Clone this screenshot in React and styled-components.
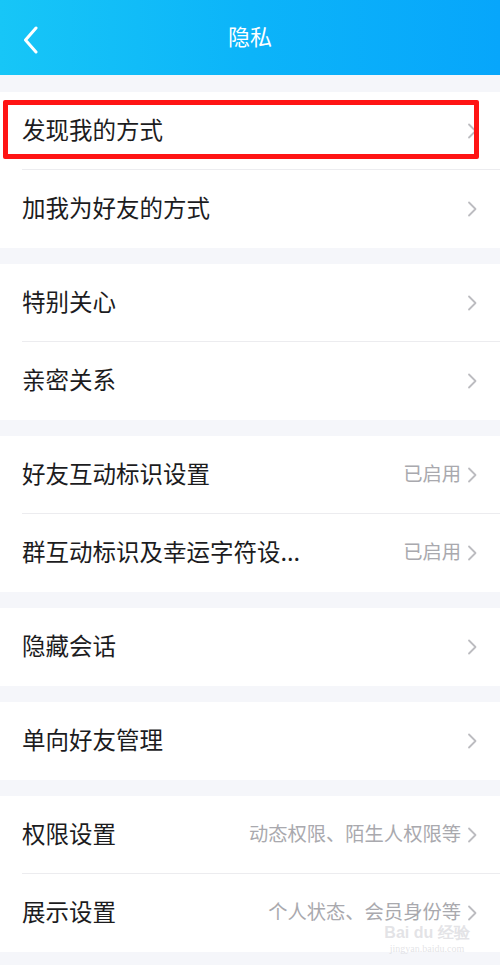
import React from 'react'
import styled, {createGlobalStyle} from 'styled-components'

const GlobalStyle = createGlobalStyle`
  html, body {
    margin: 0;
    padding: 0;
    background: #f5f6fa;
  }
  body {
    font-family: "Noto Sans CJK SC", "Noto Sans", sans-serif;
    -webkit-font-smoothing: antialiased;
  }
`

const Page = styled.div`
  width: 500px;
  height: 965px;
  overflow: hidden;
  background: #f5f6fa;
  position: relative;
`

const Header = styled.header`
  height: 75px;
  display: flex;
  align-items: center;
  justify-content: center;
  position: relative;
  background: linear-gradient(90deg, #17c6f7 0%, #0cb4f9 50%, #07a6fb 100%);
`

const BackButton = styled.div`
  position: absolute;
  left: 22px;
  top: 26px;
  width: 18px;
  height: 28px;
  display: flex;
`

const Title = styled.h1`
  margin: 0;
  font-size: 22px;
  font-weight: 400;
  color: #fff;
  line-height: 1;
  margin-top: -6px;
`

const List = styled.main`
  display: flex;
  flex-direction: column;
  gap: 16px;
  padding-top: 17px;
`

const Section = styled.section`
  background: #fff;
  display: flex;
  flex-direction: column;
`

const Row = styled.div`
  height: 78px;
  box-sizing: border-box;
  display: flex;
  align-items: center;
  padding: 0 23px 0 22px;
  position: relative;
  &:not(:last-child)::after {
    content: '';
    position: absolute;
    left: 22px;
    right: 0;
    bottom: 0;
    height: 1px;
    background: #ececef;
  }
`

const Label = styled.span`
  flex: 1;
  font-size: 23.5px;
  color: #1c1c1e;
  line-height: 1;
  white-space: nowrap;
  margin-top: -3px;
`

const Value = styled.span`
  font-size: 19.3px;
  color: #a9a9ae;
  line-height: 1;
  margin-right: 6px;
  margin-top: -3px;
  white-space: nowrap;
`

const Highlight = styled.div`
  position: absolute;
  left: 3px;
  top: 8px;
  width: 476px;
  height: 59px;
  box-sizing: border-box;
  border: 5px solid #ff1414;
  border-radius: 2px;
  pointer-events: none;
`

const Watermark = styled.div`
  position: absolute;
  left: 383px;
  top: 925px;
  width: 88px;
  display: flex;
  flex-direction: column;
  align-items: center;
  color: rgba(200, 200, 206, 0.5);
  font-family: "Liberation Sans", sans-serif;
  pointer-events: none;
`

const WatermarkLogo = styled.span`
  font-size: 16px;
  font-weight: 700;
  line-height: 1;
  white-space: nowrap;
`

const WatermarkUrl = styled.span`
  font-family: "Liberation Serif", serif;
  font-size: 10px;
  line-height: 1.1;
  margin-top: 2px;
  white-space: nowrap;
`

const Chevron = () => (
  <svg width="10" height="16" viewBox="0 0 10 16" style={{flexShrink: 0}}>
    <path d="M2 1.5 L8.5 8 L2 14.5" fill="none" stroke="#bcbcc0" strokeWidth="1.8" strokeLinecap="round" strokeLinejoin="round" />
  </svg>
)

const BackIcon = () => (
  <svg width="18" height="28" viewBox="0 0 18 28">
    <path d="M14 2 L3.5 14 L14 26" fill="none" stroke="#fff" strokeWidth="3" strokeLinecap="round" strokeLinejoin="round" />
  </svg>
)

const sections = [
  [{label: '发现我的方式', highlight: true}, {label: '加我为好友的方式'}],
  [{label: '特别关心'}, {label: '亲密关系'}],
  [
    {label: '好友互动标识设置', value: '已启用'},
    {label: '群互动标识及幸运字符设...', value: '已启用'},
  ],
  [{label: '隐藏会话'}],
  [{label: '单向好友管理'}],
  [
    {label: '权限设置', value: '动态权限、陌生人权限等'},
    {label: '展示设置', value: '个人状态、会员身份等'},
  ],
]

export default function App() {
  return (
    <Page>
      <GlobalStyle />
      <Header>
        <BackButton>
          <BackIcon />
        </BackButton>
        <Title>隐私</Title>
      </Header>
      <List>
        {sections.map((rows, i) => (
          <Section key={i}>
            {rows.map(row => (
              <Row key={row.label}>
                <Label>{row.label}</Label>
                {row.value && <Value>{row.value}</Value>}
                <Chevron />
                {row.highlight && <Highlight />}
              </Row>
            ))}
          </Section>
        ))}
      </List>
      <Watermark>
        <WatermarkLogo>Bai du 经验</WatermarkLogo>
        <WatermarkUrl>jingyan.baidu.com</WatermarkUrl>
      </Watermark>
    </Page>
  )
}
